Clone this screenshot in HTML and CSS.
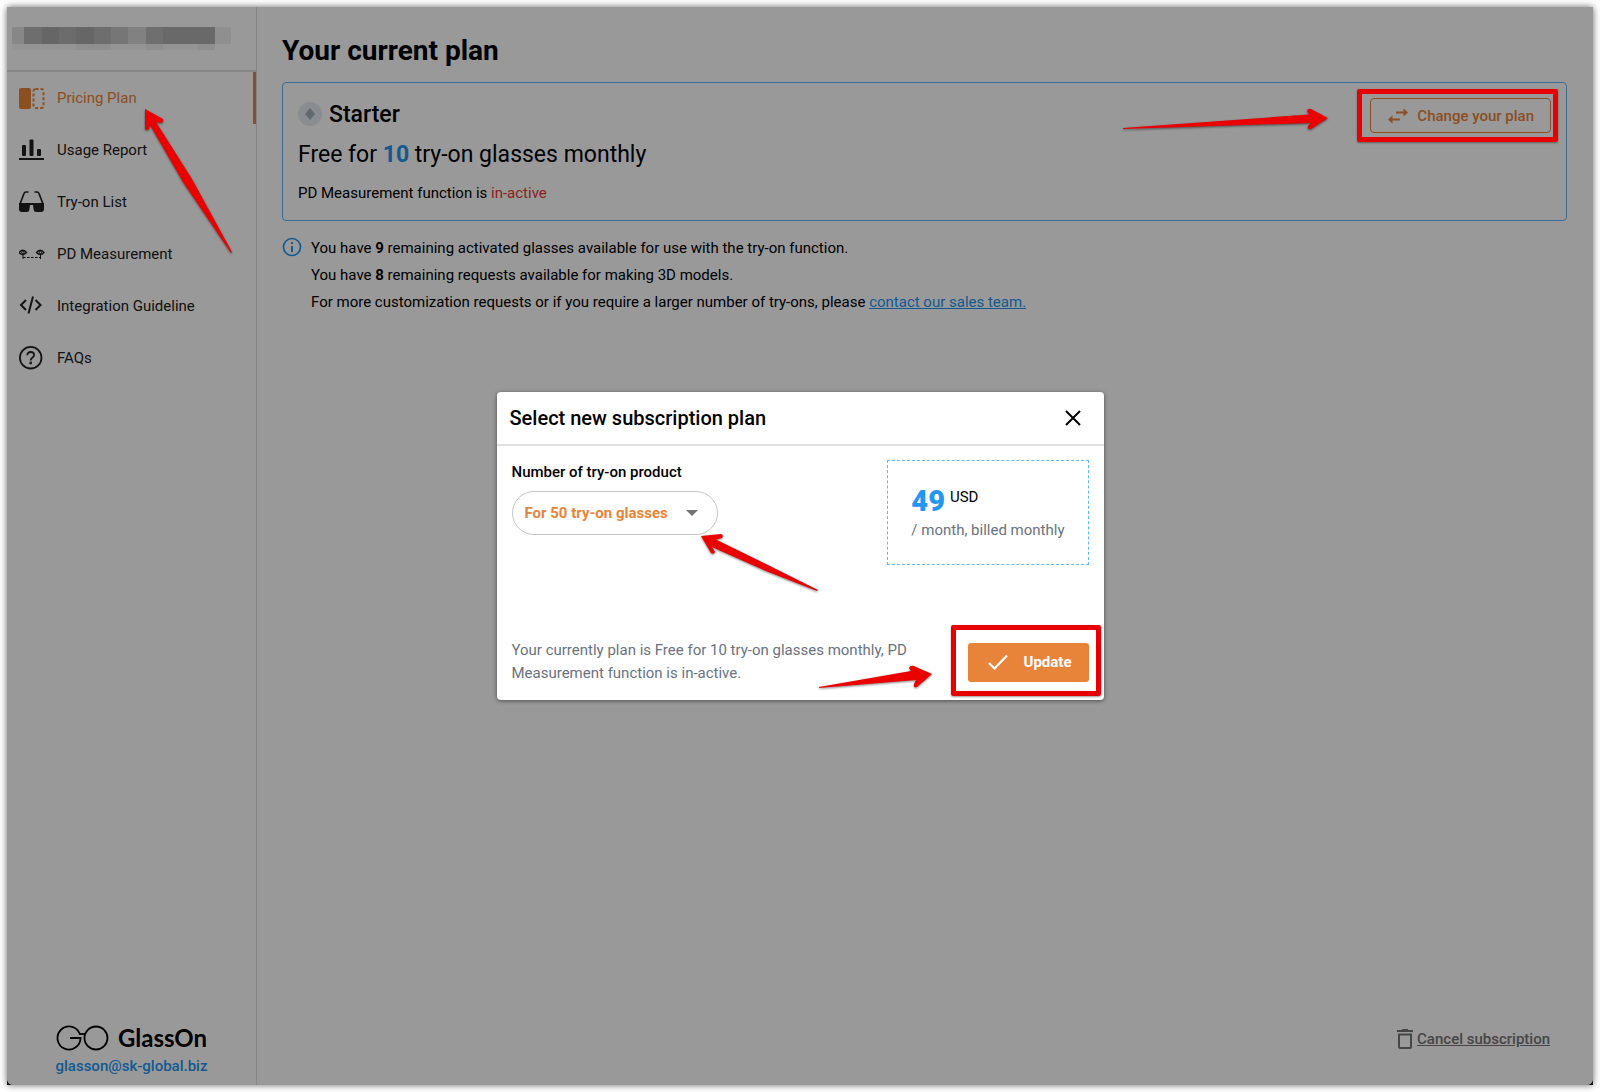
FILE: index.html
```html
<!DOCTYPE html>
<html lang="en">
<head>
    <meta charset="UTF-8">
    <meta name="viewport" content="width=device-width, initial-scale=1.0">
    <title>GlassOn - Pricing Plan</title>
    <link rel="stylesheet" href="styles.css">
</head>
<body>
    <div class="frame">
        <div class="app">
            <aside class="sidebar">
                <div class="account">
                    <svg width="219" height="24" viewBox="0 0 219 24" shape-rendering="crispEdges" aria-hidden="true">
                        <path fill="#e2e2e2" d="M0 0h12v17H0z"/>
                        <path fill="#b7b7b7" d="M12 0h18v17H12zM82 0h17v17H82z"/>
                        <path fill="#aaaaaa" d="M30 0h17v17H30zM64 0h18v17H64z"/>
                        <path fill="#b4b4b4" d="M47 0h17v17H47z"/>
                        <path fill="#c5c5c5" d="M99 0h17v17H99z"/>
                        <path fill="#d8d8d8" d="M116 0h18v17h-18z"/>
                        <path fill="#b9b9b9" d="M134 0h17v17h-17z"/>
                        <path fill="#b0b0b0" d="M151 0h52v17h-52z"/>
                        <path fill="#eeeeee" d="M203 0h16v17h-16zM64 17h35v6H64zM134 17h17v6h-17zM186 17h17v6h-17z"/>
                        <path fill="#f7f7f7" d="M0 17h64v6H0zM99 17h35v6H99zM151 17h35v6h-35z"/>
                    </svg>
                </div>
                <nav class="menu">
                    <a class="menu-item active" href="#">
                        <svg width="26" height="24" viewBox="0 0 26 24" aria-hidden="true">
                            <rect x="0" y="2" width="12" height="21" rx="2" fill="currentColor"/>
                            <rect x="14.500" y="3" width="10" height="19" rx="2" fill="none" stroke="currentColor" stroke-width="2" stroke-dasharray="3 2"/>
                        </svg>
                        Pricing Plan
                    </a>
                    <a class="menu-item" href="#">
                        <svg width="26" height="24" viewBox="0 0 26 24" fill="currentColor" aria-hidden="true">
                            <rect x="3" y="7" width="4" height="11" rx="1"/>
                            <rect x="10.500" y="1.500" width="4" height="16.500" rx="1"/>
                            <rect x="18" y="11" width="4" height="7" rx="1"/>
                            <rect x="0" y="20" width="25" height="2"/>
                        </svg>
                        Usage Report
                    </a>
                    <a class="menu-item" href="#">
                        <svg width="26" height="24" viewBox="0 0 26 24" aria-hidden="true">
                            <path d="M1 14L5 3.500Q5.500 2 7 2h2.500M24 14L20 3.500Q19.500 2 18 2h-2.500" fill="none" stroke="currentColor" stroke-width="1.700"/>
                            <path d="M0 13h25v6q0 3-3 3h-5q-2 0-2.300-2L14 15h-3l-.7 5q-.3 2-2.300 2H3q-3 0-3-3z" fill="currentColor"/>
                        </svg>
                        Try-on List
                    </a>
                    <a class="menu-item" href="#">
                        <svg width="26" height="24" viewBox="0 0 26 24" fill="none" stroke="currentColor" aria-hidden="true">
                            <path d="M0 10.500q3.500-4.500 7.500 0q-4 4-7.500 0zM17.500 10.500q4-4.500 7.500 0q-3.500 4-7.500 0z" stroke-width="1.300"/>
                            <circle cx="3.800" cy="10.300" r="1.200"/>
                            <circle cx="21.300" cy="10.300" r="1.200"/>
                            <path d="M4 13v4M21.500 13v4"/>
                            <path d="M4 15.500h17.500" stroke-dasharray="2.500 1.500"/>
                        </svg>
                        PD Measurement
                    </a>
                    <a class="menu-item" href="#">
                        <svg width="26" height="24" viewBox="0 0 26 24" fill="none" stroke="currentColor" stroke-width="2" aria-hidden="true">
                            <path d="M7 6L2 11l5 5M16.500 6l5 5-5 5M14 2.500L9.500 19.500"/>
                        </svg>
                        Integration Guideline
                    </a>
                    <a class="menu-item" href="#">
                        <svg width="26" height="24" viewBox="0 0 26 24" fill="none" stroke="currentColor" stroke-width="1.800" aria-hidden="true">
                            <circle cx="11.700" cy="11.700" r="10.800"/>
                            <path d="M8.300 9.300q0-3.300 3.400-3.300t3.400 3q0 1.500-1.800 2.700t-1.600 2.800"/>
                            <circle cx="11.700" cy="17" r=".5" fill="currentColor"/>
                        </svg>
                        FAQs
                    </a>
                </nav>
                <div class="brand">
                    <div class="logo">
                        <svg width="54" height="26" viewBox="0 0 54 26" fill="none" stroke="#000" stroke-width="1.800" aria-hidden="true">
                            <path d="M23.580 8.500A11.500 11.500 0 1 0 24.500 13H14"/>
                            <circle cx="40" cy="13" r="11.500"/>
                            <path d="M23 9h7"/>
                        </svg>
                        <span>GlassOn</span>
                    </div>
                    <a class="mail" href="mailto:glasson@sk-global.biz">glasson@sk-global.biz</a>
                </div>
            </aside>

            <main class="content">
                <h1>Your current plan</h1>
                <section class="plan">
                    <div class="plan-info">
                        <h2>
                            <svg width="24" height="26" viewBox="0 0 24 26" aria-hidden="true">
                                <circle cx="12" cy="12" r="12" fill="#e5e9f0"/>
                                <path d="M12 6l5 6-5 6-5-6z" fill="#a5b0bd"/>
                            </svg>
                            Starter
                        </h2>
                        <p class="plan-quota">Free for <strong>10</strong> try-on glasses monthly</p>
                        <p class="plan-pd">PD Measurement function is <span>in-active</span></p>
                    </div>
                    <button type="button" class="change-btn">
                        <svg width="20" height="16" viewBox="0 0 20 16" aria-hidden="true">
                            <path d="M8 5.500v-2h7.500V.5l4.500 4-4.500 4v-3zM12 10.500v2H4.500v3L0 11.500l4.500-4v3z" fill="currentColor"/>
                        </svg>
                        Change your plan
                    </button>
                </section>
                <div class="notice">
                    <svg width="20" height="20" viewBox="0 0 20 20" aria-hidden="true">
                        <circle cx="10" cy="10" r="8.500" fill="none" stroke="currentColor" stroke-width="1.700"/>
                        <path d="M9 5h2v2H9zM9 9h2v6H9z" fill="currentColor"/>
                    </svg>
                    <div>
                        <p>You have <strong>9</strong> remaining activated glasses available for use with the try-on function.</p>
                        <p>You have <strong>8</strong> remaining requests available for making 3D models.</p>
                        <p>For more customization requests or if you require a larger number of try-ons, please <a href="#">contact our sales team.</a></p>
                    </div>
                </div>
                <a class="cancel" href="#">
                    <svg width="16" height="20" viewBox="0 0 16 20" aria-hidden="true">
                        <path d="M0 1h4.500l1-1h5l1 1H16v2H0zM1 4.500h14V18q0 2-2 2H3q-2 0-2-2zM3 6.500V18h10V6.500z" fill="currentColor" fill-rule="evenodd"/>
                    </svg>
                    <span>Cancel subscription</span>
                </a>
            </main>
        </div>

        <div class="overlay">
            <div class="modal" role="dialog" aria-labelledby="modalTitle">
                <div class="modal-header">
                    <h3 id="modalTitle">Select new subscription plan</h3>
                    <button type="button" class="close-btn" aria-label="Close">
                        <svg width="16" height="16" viewBox="0 0 16 16" aria-hidden="true">
                            <path d="M1 1l14 14M15 1L1 15" stroke="#000" stroke-width="2"/>
                        </svg>
                    </button>
                </div>
                <div class="modal-body">
                    <div class="field">
                        <label for="tryon">Number of try-on product</label>
                        <div class="select-wrap">
                            <select id="tryon">
                                <option>For 50 try-on glasses</option>
                            </select>
                            <svg width="12" height="6" viewBox="0 0 12 6" aria-hidden="true">
                                <path d="M0 0h12L6 6z" fill="#757575"/>
                            </svg>
                        </div>
                    </div>
                    <div class="price">
                        <p class="amount"><strong>49</strong> <span>USD</span></p>
                        <p class="period">/ month, billed monthly</p>
                    </div>
                </div>
                <div class="modal-footer">
                    <p>Your currently plan is Free for 10 try-on glasses monthly, PD Measurement function is in-active.</p>
                    <div class="update-wrap">
                        <button type="button" class="update-btn">
                            <svg width="20" height="16" viewBox="0 0 20 16" aria-hidden="true">
                                <path d="M1 9l5.500 5.500L19 1.500" fill="none" stroke="#fff" stroke-width="2.200"/>
                            </svg>
                            Update
                        </button>
                        <div class="mark mark-update"></div>
                    </div>
                </div>
                <svg class="arrow arrow-select" width="120" height="60" viewBox="0 0 120 60" aria-hidden="true">
                    <path d="M1 1l20-2q3 1 1 4l-6 1.500L71 31.500 118 55l-1 1L66 36 12 12l3 5q-1 3-4 1z"/>
                </svg>
                <svg class="arrow arrow-update" width="118" height="32" viewBox="0 0 118 32" aria-hidden="true">
                    <path d="M1 23L93 7l-2-3q1-3 5-2l18 8-15 13q-4 1-3-3l2-4L1 24z"/>
                </svg>
            </div>
        </div>

        <div class="mark mark-change"></div>
        <svg class="arrow arrow-change" width="208" height="26" viewBox="0 0 208 26" aria-hidden="true">
            <path d="M1 20L187 6.500l-2-3.500q1-3 4-2l17 9-17 11q-4 1-3-3l3-3L1 21z"/>
        </svg>
        <svg class="arrow arrow-menu" width="92" height="148" viewBox="0 0 92 148" aria-hidden="true">
            <path d="M1 1l18 10q1 3-2 4l-5-1L48 71l40 73-1 1L39 74 6 17l-1 4q-2 2-4 0z"/>
        </svg>
    </div>
</body>
</html>
```

FILE: styles.css
```css
* {
    box-sizing: border-box;
}
body {
    font-family: Roboto, Arial, sans-serif;
    font-size: 15px;
    margin: 0;
    padding: 7px;
    color: #000;
    background-color: #fff;
}
h1, h2, h3, p {
    margin: 0;
}
button, select {
    font-family: inherit;
    font-size: 15px;
    cursor: pointer;
}
svg {
    flex-shrink: 0;
}
.frame {
    position: relative;
    display: flex;
    min-height: calc(100vh - 14px);
    background-color: #000;
    box-shadow: 0 0 7px rgba(0, 0, 0, 0.6);
}
.app {
    flex: 1;
    display: flex;
    background-color: #fff;
    border-radius: 0 0 6px 6px;
}

/* sidebar */
.sidebar {
    width: 250px;
    display: flex;
    flex-direction: column;
    border-right: 1px solid #e0e0e0;
}
.account {
    height: 65px;
    padding: 20px 5px;
    border-bottom: 2px solid #e0e0e0;
}
.menu {
    flex: 1;
}
.menu-item {
    display: flex;
    align-items: center;
    gap: 12px;
    height: 52px;
    padding-left: 12px;
    color: #212121;
    text-decoration: none;
}
.menu-item.active {
    color: #e88439;
    border-right: 3px solid #e88439;
}
.brand {
    display: flex;
    flex-direction: column;
    align-items: center;
    gap: 5px;
    padding-bottom: 9px;
}
.logo {
    display: flex;
    align-items: center;
    gap: 8px;
    font-family: Lato, sans-serif;
    font-size: 24px;
    line-height: 26px;
    font-weight: 700;
}
.mail {
    color: #2196f3;
    font-weight: 500;
    line-height: 20px;
    text-decoration: none;
}

/* content */
.content {
    flex: 1;
    display: flex;
    flex-direction: column;
    padding: 27px 26px 26px 25px;
}
h1 {
    font-size: 28px;
    line-height: 34px;
    margin-bottom: 14px;
}
.plan {
    display: flex;
    justify-content: space-between;
    align-items: flex-start;
    height: 139px;
    padding: 15px;
    border: 1px solid #64b5f6;
    border-radius: 4px;
}
.plan-info {
    padding-top: 1px;
}
h2 {
    display: flex;
    align-items: center;
    gap: 7px;
    font-size: 23px;
    line-height: 32px;
    font-weight: 500;
}
.plan-quota {
    font-size: 23px;
    line-height: 48px;
}
.plan-quota strong {
    color: #2196f3;
}
.plan-pd {
    line-height: 28px;
}
.plan-pd span {
    color: #e53935;
}
.change-btn {
    display: flex;
    align-items: center;
    gap: 9px;
    height: 35px;
    padding: 0 16px 0 17px;
    border: 1px solid #e88439;
    border-radius: 4px;
    background-color: transparent;
    color: #e88439;
    font-weight: 500;
}
.notice {
    display: flex;
    gap: 9px;
    margin-top: 14px;
    line-height: 27px;
}
.notice > svg {
    margin-top: 2px;
    color: #2196f3;
}
.notice a {
    color: #2196f3;
}
.cancel {
    display: flex;
    align-items: center;
    gap: 4px;
    margin: auto 17px 10px auto;
    color: #757575;
    font-weight: 500;
    text-decoration: none;
}
.cancel span {
    text-decoration: underline;
}

/* modal */
.overlay {
    position: absolute;
    inset: 0;
    display: flex;
    align-items: center;
    justify-content: center;
    border-radius: 0 0 6px 6px;
    background-color: rgba(0, 0, 0, 0.4);
}
.modal {
    position: relative;
    width: 607px;
    border-radius: 4px;
    background-color: #fff;
    box-shadow: 0 1px 4px rgba(0, 0, 0, 0.5);
}
.modal-header {
    display: flex;
    align-items: center;
    justify-content: space-between;
    height: 54px;
    padding: 0 23px 0 13px;
    border-bottom: 2px solid #e0e0e0;
}
h3 {
    font-size: 20px;
    font-weight: 500;
}
.close-btn {
    display: flex;
    padding: 0;
    border: none;
    background: none;
}
.modal-body {
    display: flex;
    justify-content: space-between;
    align-items: flex-start;
    padding: 14px 15px;
}
.field label {
    display: block;
    margin-bottom: 7px;
    line-height: 24px;
    font-weight: 500;
}
.select-wrap {
    position: relative;
}
.select-wrap select {
    width: 206px;
    height: 44px;
    padding: 0 12px;
    border: 1px solid #c4c4c4;
    border-radius: 22px;
    appearance: none;
    background-color: #fff;
    color: #e88439;
    font-weight: 700;
}
.select-wrap svg {
    position: absolute;
    top: 19px;
    right: 20px;
    pointer-events: none;
}
.price {
    height: 105px;
    padding: 24px 23px 0;
    border: 1px dashed #64b5f6;
}
.amount {
    display: flex;
    gap: 5px;
    line-height: 32px;
}
.amount strong {
    color: #2196f3;
    font-size: 29px;
    font-weight: 900;
}
.amount span {
    line-height: 24px;
}
.period {
    line-height: 26px;
    color: #6b7280;
}
.modal-footer {
    display: flex;
    justify-content: space-between;
    align-items: center;
    padding: 60px 15px 15px;
}
.modal-footer p {
    width: 420px;
    line-height: 23px;
    color: #6b7280;
}
.update-wrap {
    position: relative;
}
.update-btn {
    display: flex;
    align-items: center;
    gap: 16px;
    height: 39px;
    padding: 0 17px 0 20px;
    border: none;
    border-radius: 3px;
    background-color: #e88439;
    color: #fff;
    font-weight: 700;
}

/* red highlights and arrows drawn over the page */
.mark {
    position: absolute;
    border: 5px solid #e60000;
    border-radius: 2px;
    box-shadow: 0 1px 2px rgba(0, 0, 0, 0.4);
    pointer-events: none;
}
.mark-change {
    top: 82px;
    right: 35px;
    width: 201px;
    height: 53px;
}
.mark-update {
    inset: -18px -12px -14px -17px;
}
.arrow {
    position: absolute;
    overflow: visible;
    fill: #eb0000;
    filter: drop-shadow(0 1px 1px rgba(0, 0, 0, 0.5));
    pointer-events: none;
}
.arrow-menu {
    top: 101px;
    left: 137px;
}
.arrow-change {
    top: 101px;
    right: 263px;
}
.arrow-select {
    top: 143px;
    left: 203px;
}
.arrow-update {
    top: 272px;
    left: 321px;
}
```
